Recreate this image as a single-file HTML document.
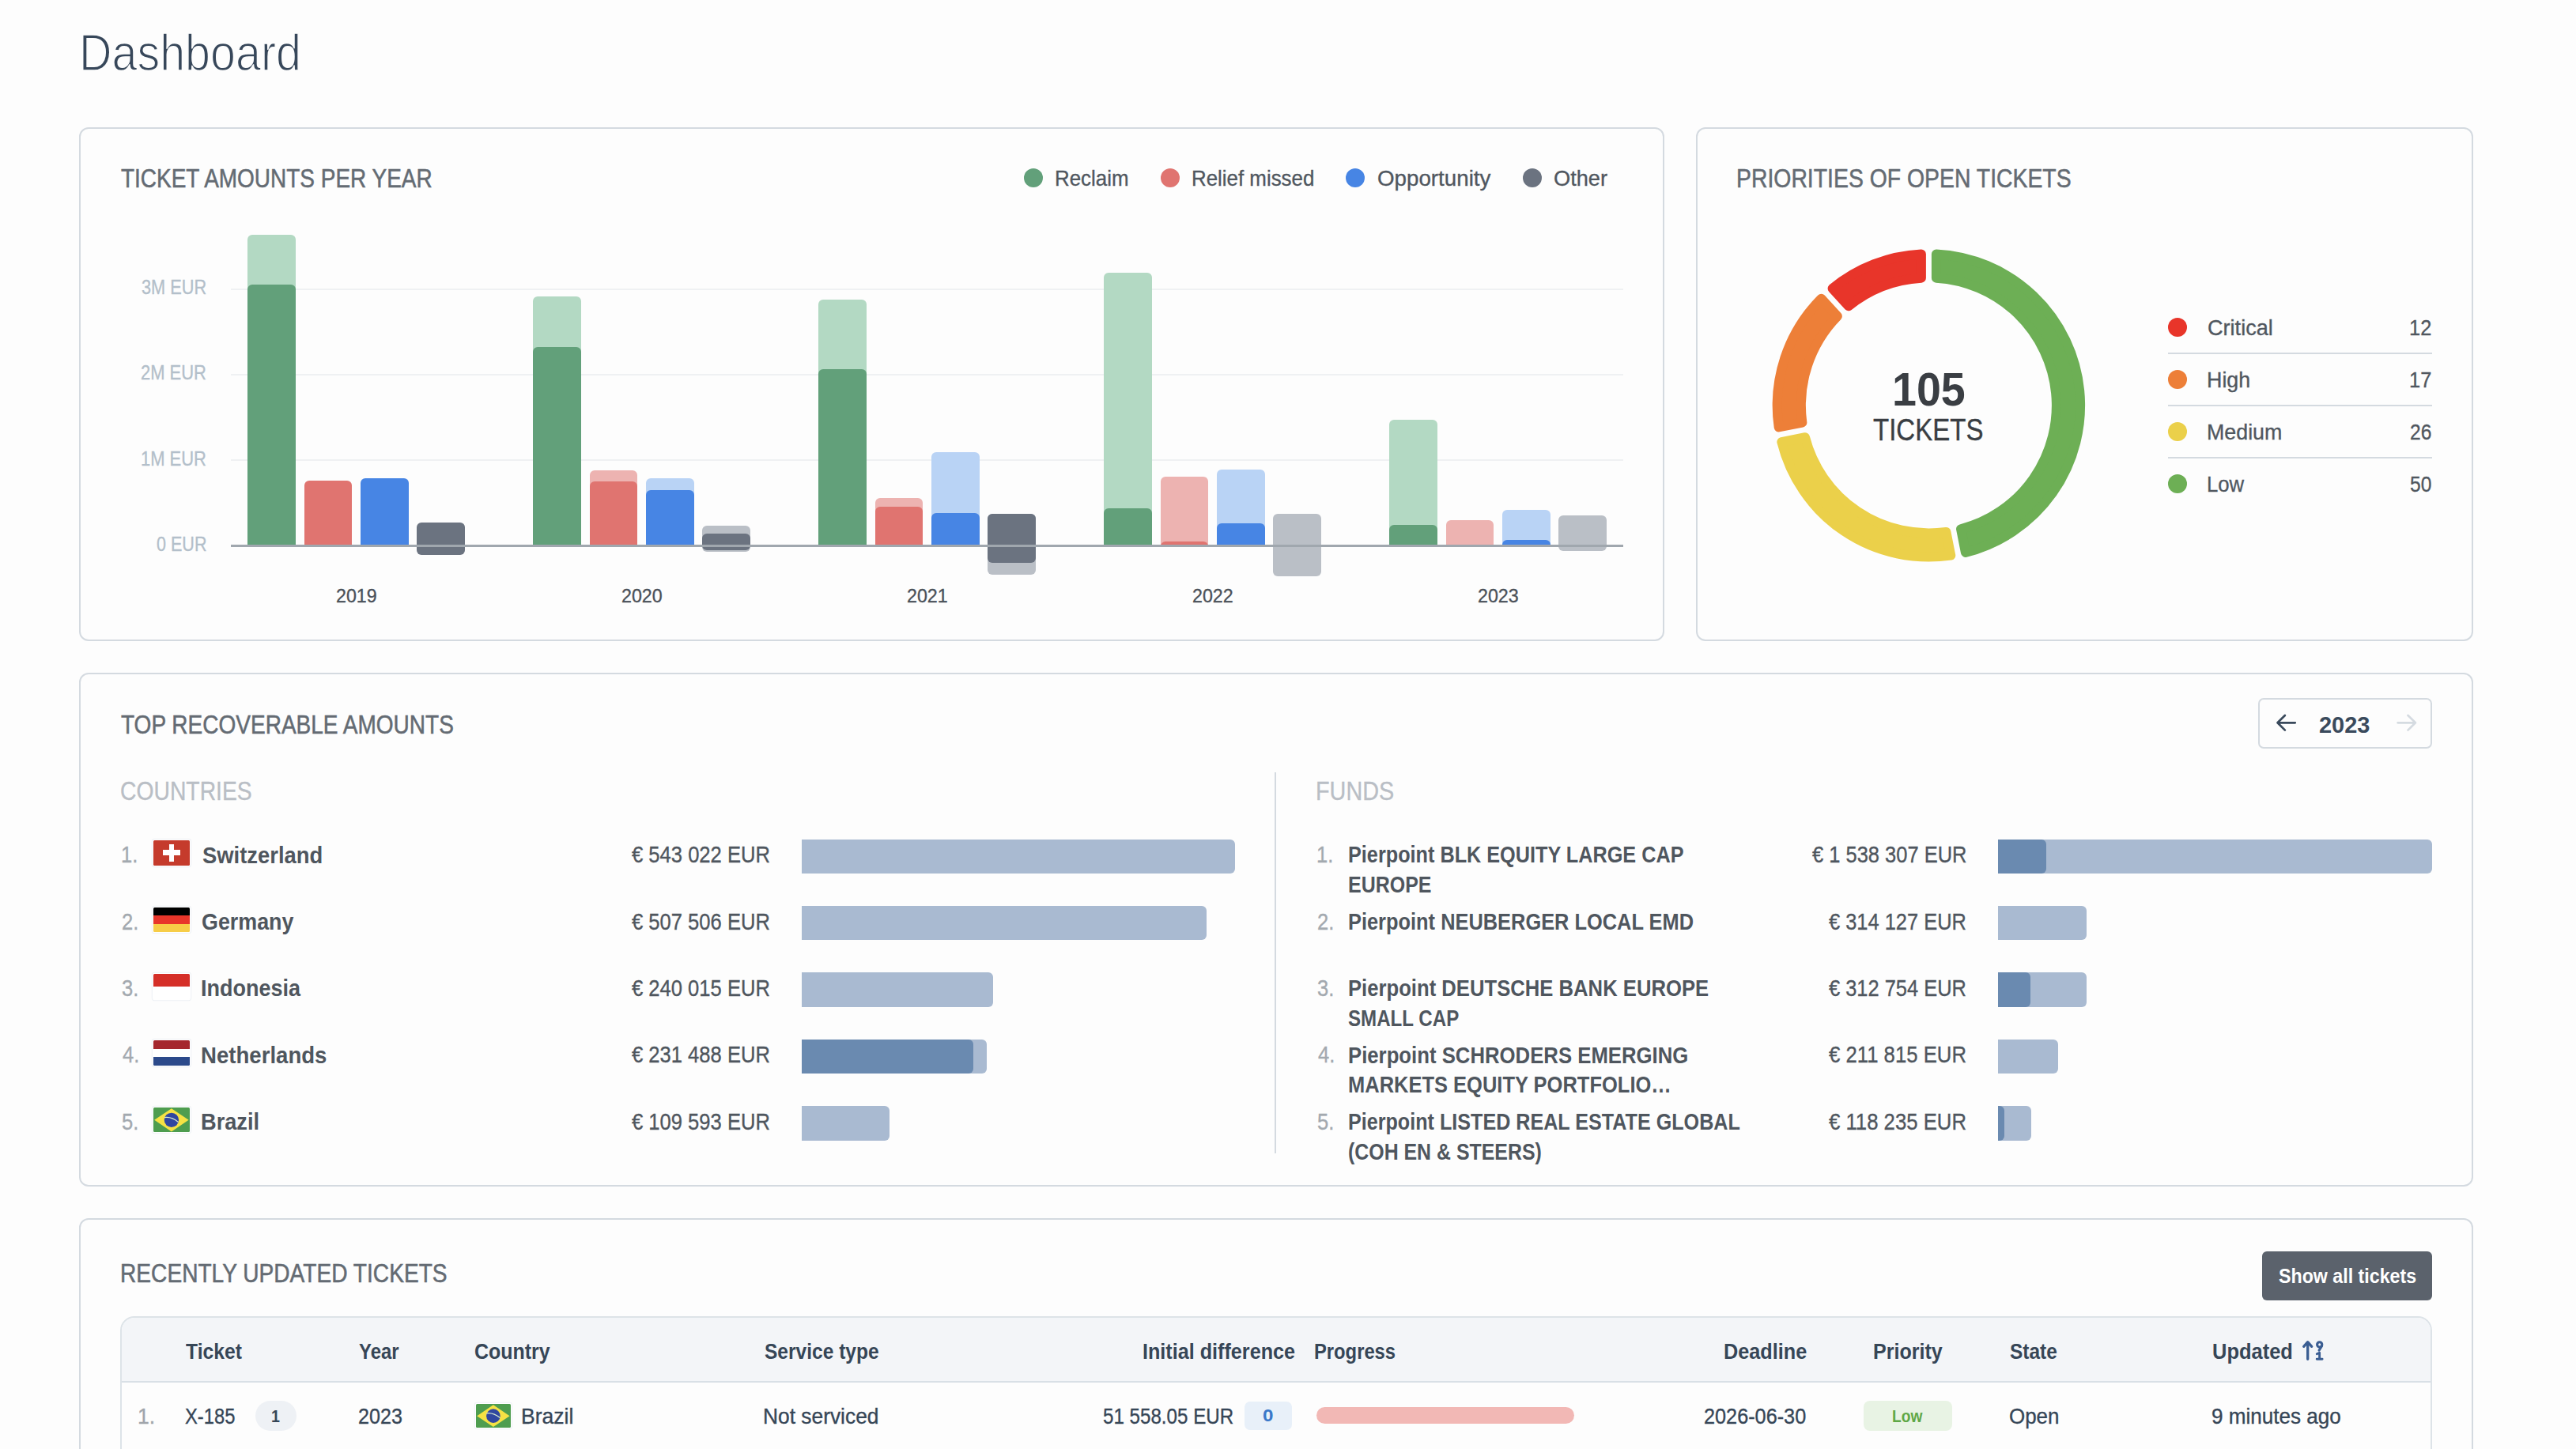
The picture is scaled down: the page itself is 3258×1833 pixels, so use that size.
<!DOCTYPE html>
<html><head><meta charset="utf-8"><title>Dashboard</title>
<style>
html,body{margin:0;padding:0;width:3258px;height:1833px;overflow:hidden;background:#fdfdfd}
body{position:relative;font-family:"Liberation Sans",sans-serif}
.t{position:absolute;white-space:nowrap;line-height:1;transform-origin:0 0}
</style></head><body>
<div style="position:absolute;left:99.7px;top:161.2px;width:2005.3px;height:649.8px;border:2px solid #d4dae0;border-radius:12px;box-sizing:border-box"></div><div style="position:absolute;left:2145.1px;top:161.2px;width:982.9px;height:649.8px;border:2px solid #d4dae0;border-radius:12px;box-sizing:border-box"></div><div style="position:absolute;left:99.7px;top:851.3px;width:3028.3px;height:649.7px;border:2px solid #d4dae0;border-radius:12px;box-sizing:border-box"></div><div style="position:absolute;left:99.7px;top:1541.0px;width:3028.3px;height:359.0px;border:2px solid #d4dae0;border-radius:12px;box-sizing:border-box"></div><div style="position:absolute;left:1295.0px;top:213.0px;width:24.0px;height:24.0px;background:#62a07a;border-radius:50%"></div><div style="position:absolute;left:1468.0px;top:213.0px;width:24.0px;height:24.0px;background:#e07470;border-radius:50%"></div><div style="position:absolute;left:1702.0px;top:213.0px;width:24.0px;height:24.0px;background:#4785e4;border-radius:50%"></div><div style="position:absolute;left:1925.6px;top:213.0px;width:24.0px;height:24.0px;background:#6b7380;border-radius:50%"></div><div style="position:absolute;left:292.0px;top:364.5px;width:1761.0px;height:2.0px;background:#eff1f3"></div><div style="position:absolute;left:292.0px;top:472.6px;width:1761.0px;height:2.0px;background:#eff1f3"></div><div style="position:absolute;left:292.0px;top:580.5px;width:1761.0px;height:2.0px;background:#eff1f3"></div><div style="position:absolute;left:313.2px;top:296.9px;width:60.5px;height:394.4px;background:#b3d9c3;border-radius:6px 6px 0 0"></div><div style="position:absolute;left:313.2px;top:359.5px;width:60.5px;height:331.8px;background:#62a07a;border-radius:6px 6px 0 0"></div><div style="position:absolute;left:384.6px;top:608.1px;width:60.5px;height:83.2px;background:#e07470;border-radius:6px 6px 0 0"></div><div style="position:absolute;left:456.0px;top:605.0px;width:60.5px;height:86.3px;background:#4785e4;border-radius:6px 6px 0 0"></div><div style="position:absolute;left:527.4px;top:661.4px;width:60.5px;height:41.0px;background:#6b7380;border-radius:6px"></div><div style="position:absolute;left:674.2px;top:375.1px;width:60.5px;height:316.2px;background:#b3d9c3;border-radius:6px 6px 0 0"></div><div style="position:absolute;left:674.2px;top:438.6px;width:60.5px;height:252.7px;background:#62a07a;border-radius:6px 6px 0 0"></div><div style="position:absolute;left:745.6px;top:594.8px;width:60.5px;height:96.5px;background:#edb3b1;border-radius:6px 6px 0 0"></div><div style="position:absolute;left:745.6px;top:608.7px;width:60.5px;height:82.6px;background:#e07470;border-radius:6px 6px 0 0"></div><div style="position:absolute;left:817.0px;top:604.6px;width:60.5px;height:86.7px;background:#b9d3f5;border-radius:6px 6px 0 0"></div><div style="position:absolute;left:817.0px;top:619.7px;width:60.5px;height:71.6px;background:#4785e4;border-radius:6px 6px 0 0"></div><div style="position:absolute;left:888.4px;top:665.0px;width:60.5px;height:33.0px;background:#babfc6;border-radius:6px"></div><div style="position:absolute;left:888.4px;top:675.4px;width:60.5px;height:20.6px;background:#6b7380;border-radius:6px"></div><div style="position:absolute;left:1035.2px;top:378.8px;width:60.5px;height:312.5px;background:#b3d9c3;border-radius:6px 6px 0 0"></div><div style="position:absolute;left:1035.2px;top:467.0px;width:60.5px;height:224.3px;background:#62a07a;border-radius:6px 6px 0 0"></div><div style="position:absolute;left:1106.6px;top:629.9px;width:60.5px;height:61.4px;background:#edb3b1;border-radius:6px 6px 0 0"></div><div style="position:absolute;left:1106.6px;top:640.9px;width:60.5px;height:50.4px;background:#e07470;border-radius:6px 6px 0 0"></div><div style="position:absolute;left:1178.0px;top:572.2px;width:60.5px;height:119.1px;background:#b9d3f5;border-radius:6px 6px 0 0"></div><div style="position:absolute;left:1178.0px;top:649.0px;width:60.5px;height:42.3px;background:#4785e4;border-radius:6px 6px 0 0"></div><div style="position:absolute;left:1249.4px;top:650.1px;width:60.5px;height:77.1px;background:#babfc6;border-radius:6px"></div><div style="position:absolute;left:1249.4px;top:650.1px;width:60.5px;height:61.5px;background:#6b7380;border-radius:6px"></div><div style="position:absolute;left:1396.2px;top:345.2px;width:60.5px;height:346.1px;background:#b3d9c3;border-radius:6px 6px 0 0"></div><div style="position:absolute;left:1396.2px;top:642.7px;width:60.5px;height:48.6px;background:#62a07a;border-radius:6px 6px 0 0"></div><div style="position:absolute;left:1467.6px;top:603.0px;width:60.5px;height:88.3px;background:#edb3b1;border-radius:6px 6px 0 0"></div><div style="position:absolute;left:1467.6px;top:684.9px;width:60.5px;height:6.4px;background:#e07470;border-radius:6px 6px 0 0"></div><div style="position:absolute;left:1539.0px;top:593.8px;width:60.5px;height:97.5px;background:#b9d3f5;border-radius:6px 6px 0 0"></div><div style="position:absolute;left:1539.0px;top:662.4px;width:60.5px;height:28.9px;background:#4785e4;border-radius:6px 6px 0 0"></div><div style="position:absolute;left:1610.4px;top:650.3px;width:60.5px;height:78.3px;background:#babfc6;border-radius:6px"></div><div style="position:absolute;left:1757.2px;top:531.0px;width:60.5px;height:160.3px;background:#b3d9c3;border-radius:6px 6px 0 0"></div><div style="position:absolute;left:1757.2px;top:663.6px;width:60.5px;height:27.7px;background:#62a07a;border-radius:6px 6px 0 0"></div><div style="position:absolute;left:1828.6px;top:658.0px;width:60.5px;height:33.3px;background:#edb3b1;border-radius:6px 6px 0 0"></div><div style="position:absolute;left:1900.0px;top:645.0px;width:60.5px;height:46.3px;background:#b9d3f5;border-radius:6px 6px 0 0"></div><div style="position:absolute;left:1900.0px;top:683.0px;width:60.5px;height:8.3px;background:#4785e4;border-radius:6px 6px 0 0"></div><div style="position:absolute;left:1971.4px;top:652.2px;width:60.5px;height:44.5px;background:#babfc6;border-radius:6px"></div><div style="position:absolute;left:292.0px;top:688.9px;width:1761.0px;height:2.8px;background:#a0a7ae"></div><div style="position:absolute;left:2742.1px;top:401.9px;width:23.9px;height:24.0px;background:#e8352a;border-radius:50%"></div><div style="position:absolute;left:2742.1px;top:467.9px;width:23.9px;height:24.0px;background:#ed7f38;border-radius:50%"></div><div style="position:absolute;left:2742.1px;top:534.0px;width:23.9px;height:24.0px;background:#ebd04a;border-radius:50%"></div><div style="position:absolute;left:2742.1px;top:599.8px;width:23.9px;height:24.0px;background:#6daf55;border-radius:50%"></div><div style="position:absolute;left:2742.0px;top:445.9px;width:334.0px;height:2.0px;background:#d4dae0"></div><div style="position:absolute;left:2742.0px;top:511.9px;width:334.0px;height:2.0px;background:#d4dae0"></div><div style="position:absolute;left:2742.0px;top:577.8px;width:334.0px;height:2.0px;background:#d4dae0"></div><div style="position:absolute;left:2856.3px;top:883.2px;width:219.4px;height:63.5px;border:2px solid #d4dae0;border-radius:7px;box-sizing:border-box"></div><div style="position:absolute;left:1612.0px;top:977.0px;width:2.0px;height:481.7px;background:#d4dae0"></div><div style="position:absolute;left:194.2px;top:1063.1px;width:45.8px;height:31.7px;overflow:hidden;border-radius:1.5px;box-shadow:0 0 0 1.2px #fff,0 0 0 2.2px #eef1f5"><div style="position:absolute;inset:0;background:#c53b2c"></div><div style="position:absolute;left:19.80px;top:4.60px;width:6.2px;height:22.5px;background:#fff"></div><div style="position:absolute;left:11.80px;top:12.35px;width:22.2px;height:7px;background:#fff"></div></div><div style="position:absolute;left:1013.8px;top:1061.6px;width:548.0px;height:43.4px;background:#a9bad1;border-radius:0 6px 6px 0"></div><div style="position:absolute;left:194.2px;top:1147.5px;width:45.8px;height:31.7px;overflow:hidden;border-radius:1.5px;box-shadow:0 0 0 1.2px #fff,0 0 0 2.2px #eef1f5"><div style="position:absolute;inset:0;background:linear-gradient(#000 0 33.3%,#e8352a 33.3% 66.6%,#f7cd47 66.6%)"></div></div><div style="position:absolute;left:1013.8px;top:1146.0px;width:511.8px;height:43.4px;background:#a9bad1;border-radius:0 6px 6px 0"></div><div style="position:absolute;left:194.2px;top:1231.9px;width:45.8px;height:31.7px;overflow:hidden;border-radius:1.5px;box-shadow:0 0 0 1.2px #fff,0 0 0 2.2px #eef1f5"><div style="position:absolute;inset:0;background:linear-gradient(#d52f28 0 50%,#fff 50%)"></div></div><div style="position:absolute;left:1013.8px;top:1230.4px;width:241.9px;height:43.4px;background:#a9bad1;border-radius:0 6px 6px 0"></div><div style="position:absolute;left:194.2px;top:1316.3px;width:45.8px;height:31.7px;overflow:hidden;border-radius:1.5px;box-shadow:0 0 0 1.2px #fff,0 0 0 2.2px #eef1f5"><div style="position:absolute;inset:0;background:linear-gradient(#a5272e 0 33.3%,#fff 33.3% 66.6%,#2c4a8b 66.6%)"></div></div><div style="position:absolute;left:1013.8px;top:1314.8px;width:234.1px;height:43.4px;background:#a9bad1;border-radius:0 6px 6px 0"></div><div style="position:absolute;left:1013.8px;top:1314.8px;width:217.0px;height:43.4px;background:#6a8ab0;border-radius:0 6px 6px 0"></div><div style="position:absolute;left:194.2px;top:1400.7px;width:45.8px;height:31.7px;overflow:hidden;border-radius:1.5px;box-shadow:0 0 0 1.2px #fff,0 0 0 2.2px #eef1f5"><div style="position:absolute;inset:0;background:#4e9d4f"></div><svg style="position:absolute;left:0;top:0" width="45.8" height="31.7"><polygon points="22.9,1.2 44.599999999999994,15.85 22.9,30.5 1.2,15.85" fill="#f5e244"/><circle cx="22.9" cy="15.85" r="9.19" fill="#3047a0"/><path d="M14.1,12.6 Q22.9,11.3 31.5,18.4" fill="none" stroke="#d8ecd0" stroke-width="1.3"/></svg></div><div style="position:absolute;left:1013.8px;top:1399.2px;width:111.1px;height:43.4px;background:#a9bad1;border-radius:0 6px 6px 0"></div><div style="position:absolute;left:2526.9px;top:1061.6px;width:549.0px;height:43.4px;background:#a9bad1;border-radius:0 6px 6px 0"></div><div style="position:absolute;left:2526.9px;top:1061.6px;width:60.9px;height:43.4px;background:#6a8ab0;border-radius:0 6px 6px 0"></div><div style="position:absolute;left:2526.9px;top:1146.0px;width:112.1px;height:43.4px;background:#a9bad1;border-radius:0 6px 6px 0"></div><div style="position:absolute;left:2526.9px;top:1230.4px;width:112.1px;height:43.4px;background:#a9bad1;border-radius:0 6px 6px 0"></div><div style="position:absolute;left:2526.9px;top:1230.4px;width:41.5px;height:43.4px;background:#6a8ab0;border-radius:0 6px 6px 0"></div><div style="position:absolute;left:2526.9px;top:1314.8px;width:75.9px;height:43.4px;background:#a9bad1;border-radius:0 6px 6px 0"></div><div style="position:absolute;left:2526.9px;top:1399.2px;width:41.9px;height:43.4px;background:#a9bad1;border-radius:0 6px 6px 0"></div><div style="position:absolute;left:2526.9px;top:1399.2px;width:7.9px;height:43.4px;background:#6a8ab0;border-radius:0 6px 6px 0"></div><div style="position:absolute;left:2861.0px;top:1583.0px;width:215.0px;height:62.0px;background:#5b626c;border-radius:6px"></div><div style="position:absolute;left:151.8px;top:1665px;width:2923.9px;height:300px;border:2px solid #dde3e8;border-radius:18px;box-sizing:border-box;overflow:hidden"><div style="position:absolute;left:0;top:0;right:0;height:80px;background:#f3f5f8;border-bottom:2px solid #d9e0e6"></div></div><div style="position:absolute;left:323.1px;top:1772.3px;width:51.7px;height:37.5px;background:#eef1f5;border-radius:19px"></div><div style="position:absolute;left:602.2px;top:1775.8px;width:43.8px;height:30.3px;overflow:hidden;border-radius:1.5px;box-shadow:0 0 0 1.2px #fff,0 0 0 2.2px #eef1f5"><div style="position:absolute;inset:0;background:#4e9d4f"></div><svg style="position:absolute;left:0;top:0" width="43.8" height="30.3"><polygon points="21.9,1.2 42.599999999999994,15.15 21.9,29.1 1.2,15.15" fill="#f5e244"/><circle cx="21.9" cy="15.15" r="8.79" fill="#3047a0"/><path d="M13.1,11.9 Q21.9,10.7 30.5,17.6" fill="none" stroke="#d8ecd0" stroke-width="1.3"/></svg></div><div style="position:absolute;left:1574.2px;top:1773.3px;width:59.5px;height:35.3px;background:#e8f0f9;border-radius:7px"></div><div style="position:absolute;left:1664.9px;top:1780.1px;width:326.1px;height:21.4px;background:#f2b8b5;border-radius:11px"></div><div style="position:absolute;left:2357.1px;top:1771.9px;width:111.9px;height:37.9px;background:#e8f3e4;border-radius:8px"></div>
<svg style="position:absolute;left:0;top:0" width="3258" height="1833" viewBox="0 0 3258 1833"><path d="M2448.90,321.44 A191.7,191.7 0 0 1 2485.91,698.87 L2480.03,669.20 A161.5,161.5 0 0 0 2448.90,351.68 Z" fill="#6daf55" stroke="#6daf55" stroke-width="12" stroke-linejoin="round"/><path d="M2467.27,702.56 A191.7,191.7 0 0 1 2253.35,559.08 L2283.02,553.26 A161.5,161.5 0 0 0 2461.40,672.90 Z" fill="#ebd04a" stroke="#ebd04a" stroke-width="12" stroke-linejoin="round"/><path d="M2249.69,540.44 A191.7,191.7 0 0 1 2303.52,377.68 L2323.87,400.05 A161.5,161.5 0 0 0 2279.37,534.62 Z" fill="#ed7f38" stroke="#ed7f38" stroke-width="12" stroke-linejoin="round"/><path d="M2317.57,364.89 A191.7,191.7 0 0 1 2429.90,321.44 L2429.90,351.68 A161.5,161.5 0 0 0 2337.92,387.26 Z" fill="#e8352a" stroke="#e8352a" stroke-width="12" stroke-linejoin="round"/></svg>
<svg style="position:absolute;left:0;top:0" width="3258" height="1833"><path d="M2902.8,914.3 H2880.6 M2889.9,905 L2880.5,914.3 L2889.9,923.6" fill="none" stroke="#3a4a5c" stroke-width="2.7" stroke-linecap="round" stroke-linejoin="round"/><path d="M3032.6,914.3 H3054.8 M3045.5,905 L3054.9,914.3 L3045.5,923.6" fill="none" stroke="#d5dbe1" stroke-width="2.7" stroke-linecap="round" stroke-linejoin="round"/></svg>
<svg style="position:absolute;left:0;top:0" width="3258" height="1833"><g fill="none" stroke="#3a5d92" stroke-linecap="round" stroke-linejoin="round"><path d="M2918.7,1719.3 V1697.8 M2913.7,1703.3 L2918.7,1697.7 L2923.7,1703.3" stroke-width="3.3"/><circle cx="2933.7" cy="1700.9" r="3.1" stroke-width="3.1"/><path d="M2936.4,1703 L2933.1,1708.2" stroke-width="3.1"/><path d="M2930.3,1712.7 L2933.6,1711.2 V1719.3 M2930.2,1719.3 H2937.1" stroke-width="2.9"/></g></svg>
<div class="t" style="left:100.3px;top:35.1px;font-size:64.83px;-webkit-text-stroke:1.6px #fdfdfd;color:#37475a;transform:scaleX(0.8860)">Dashboard</div><div class="t" style="left:152.7px;top:209.4px;font-size:33.14px;-webkit-text-stroke:0.55px currentColor;color:#646b73;transform:scaleX(0.8443)">TICKET AMOUNTS PER YEAR</div><div class="t" style="left:2196.1px;top:209.3px;font-size:33.14px;-webkit-text-stroke:0.55px currentColor;color:#646b73;transform:scaleX(0.8567)">PRIORITIES OF OPEN TICKETS</div><div class="t" style="left:152.9px;top:899.6px;font-size:33.14px;-webkit-text-stroke:0.55px currentColor;color:#646b73;transform:scaleX(0.8458)">TOP RECOVERABLE AMOUNTS</div><div class="t" style="left:151.8px;top:1593.6px;font-size:33.14px;-webkit-text-stroke:0.55px currentColor;color:#646b73;transform:scaleX(0.8490)">RECENTLY UPDATED TICKETS</div><div class="t" style="left:1333.7px;top:211.7px;font-size:27.91px;-webkit-text-stroke:0.35px currentColor;color:#50575f;transform:scaleX(0.9272)">Reclaim</div><div class="t" style="left:1506.6px;top:211.7px;font-size:27.91px;-webkit-text-stroke:0.35px currentColor;color:#50575f;transform:scaleX(0.9275)">Relief missed</div><div class="t" style="left:1741.6px;top:211.7px;font-size:27.91px;-webkit-text-stroke:0.35px currentColor;color:#50575f;transform:scaleX(0.9942)">Opportunity</div><div class="t" style="left:1965.0px;top:211.7px;font-size:27.91px;-webkit-text-stroke:0.35px currentColor;color:#50575f;transform:scaleX(0.9742)">Other</div><div class="t" style="left:179.3px;top:350.8px;font-size:25.58px;-webkit-text-stroke:0.35px currentColor;color:#b3bfca;transform:scaleX(0.8495)">3M EUR</div><div class="t" style="left:178.4px;top:459.3px;font-size:25.58px;-webkit-text-stroke:0.35px currentColor;color:#b3bfca;transform:scaleX(0.8585)">2M EUR</div><div class="t" style="left:178.4px;top:567.8px;font-size:25.58px;-webkit-text-stroke:0.35px currentColor;color:#b3bfca;transform:scaleX(0.8585)">1M EUR</div><div class="t" style="left:198.0px;top:675.8px;font-size:25.58px;-webkit-text-stroke:0.35px currentColor;color:#b3bfca;transform:scaleX(0.8421)">0 EUR</div><div class="t" style="left:424.6px;top:741.8px;font-size:24.71px;-webkit-text-stroke:0.35px currentColor;color:#4b5159;transform:scaleX(0.9400)">2019</div><div class="t" style="left:785.6px;top:741.8px;font-size:24.71px;-webkit-text-stroke:0.35px currentColor;color:#4b5159;transform:scaleX(0.9400)">2020</div><div class="t" style="left:1146.6px;top:741.8px;font-size:24.71px;-webkit-text-stroke:0.35px currentColor;color:#4b5159;transform:scaleX(0.9400)">2021</div><div class="t" style="left:1507.6px;top:741.8px;font-size:24.71px;-webkit-text-stroke:0.35px currentColor;color:#4b5159;transform:scaleX(0.9400)">2022</div><div class="t" style="left:1868.6px;top:741.8px;font-size:24.71px;-webkit-text-stroke:0.35px currentColor;color:#4b5159;transform:scaleX(0.9400)">2023</div><div class="t" style="left:2392.5px;top:463.0px;font-size:59.30px;font-weight:bold;color:#3a3e43;transform:scaleX(0.9373)">105</div><div class="t" style="left:2369.1px;top:524.6px;font-size:38.52px;-webkit-text-stroke:0.35px currentColor;color:#3a3e43;transform:scaleX(0.8571)">TICKETS</div><div class="t" style="left:2792.2px;top:400.8px;font-size:27.91px;-webkit-text-stroke:0.35px currentColor;color:#50575f;transform:scaleX(0.9708)">Critical</div><div class="t" style="left:3047.4px;top:400.8px;font-size:27.91px;-webkit-text-stroke:0.35px currentColor;color:#50575f;transform:scaleX(0.9119)">12</div><div class="t" style="left:2791.3px;top:466.8px;font-size:27.91px;-webkit-text-stroke:0.35px currentColor;color:#50575f;transform:scaleX(0.9619)">High</div><div class="t" style="left:3047.4px;top:466.8px;font-size:27.91px;-webkit-text-stroke:0.35px currentColor;color:#50575f;transform:scaleX(0.9119)">17</div><div class="t" style="left:2791.3px;top:532.9px;font-size:27.91px;-webkit-text-stroke:0.35px currentColor;color:#50575f;transform:scaleX(0.9608)">Medium</div><div class="t" style="left:3048.3px;top:532.9px;font-size:27.91px;-webkit-text-stroke:0.35px currentColor;color:#50575f;transform:scaleX(0.8810)">26</div><div class="t" style="left:2791.4px;top:598.7px;font-size:27.91px;-webkit-text-stroke:0.35px currentColor;color:#50575f;transform:scaleX(0.9216)">Low</div><div class="t" style="left:3048.3px;top:598.7px;font-size:27.91px;-webkit-text-stroke:0.35px currentColor;color:#50575f;transform:scaleX(0.8810)">50</div><div class="t" style="left:2933.3px;top:901.7px;font-size:30.09px;font-weight:bold;color:#3a4a5c;transform:scaleX(0.9619)">2023</div><div class="t" style="left:152.0px;top:983.6px;font-size:33.14px;-webkit-text-stroke:0.35px currentColor;color:#b9bec5;transform:scaleX(0.8545)">COUNTRIES</div><div class="t" style="left:1664.0px;top:983.7px;font-size:33.14px;-webkit-text-stroke:0.35px currentColor;color:#b9bec5;transform:scaleX(0.8694)">FUNDS</div><div class="t" style="left:152.7px;top:1067.1px;font-size:29.07px;-webkit-text-stroke:0.35px currentColor;color:#a3a9af;transform:scaleX(0.8800)">1.</div><div class="t" style="left:256.0px;top:1066.5px;font-size:29.80px;font-weight:bold;color:#4f565e;transform:scaleX(0.9203)">Switzerland</div><div class="t" style="left:799.3px;top:1067.1px;font-size:29.07px;-webkit-text-stroke:0.35px currentColor;color:#4f565e;transform:scaleX(0.8804)">€ 543 022 EUR</div><div class="t" style="left:153.6px;top:1151.5px;font-size:29.07px;-webkit-text-stroke:0.35px currentColor;color:#a3a9af;transform:scaleX(0.8800)">2.</div><div class="t" style="left:255.1px;top:1150.9px;font-size:29.80px;font-weight:bold;color:#4f565e;transform:scaleX(0.9016)">Germany</div><div class="t" style="left:799.4px;top:1151.5px;font-size:29.07px;-webkit-text-stroke:0.35px currentColor;color:#4f565e;transform:scaleX(0.8800)">€ 507 506 EUR</div><div class="t" style="left:153.6px;top:1235.9px;font-size:29.07px;-webkit-text-stroke:0.35px currentColor;color:#a3a9af;transform:scaleX(0.8800)">3.</div><div class="t" style="left:254.2px;top:1235.3px;font-size:29.80px;font-weight:bold;color:#4f565e;transform:scaleX(0.9066)">Indonesia</div><div class="t" style="left:799.4px;top:1235.9px;font-size:29.07px;-webkit-text-stroke:0.35px currentColor;color:#4f565e;transform:scaleX(0.8800)">€ 240 015 EUR</div><div class="t" style="left:154.5px;top:1320.3px;font-size:29.07px;-webkit-text-stroke:0.35px currentColor;color:#a3a9af;transform:scaleX(0.8800)">4.</div><div class="t" style="left:254.1px;top:1319.7px;font-size:29.80px;font-weight:bold;color:#4f565e;transform:scaleX(0.9260)">Netherlands</div><div class="t" style="left:799.4px;top:1320.3px;font-size:29.07px;-webkit-text-stroke:0.35px currentColor;color:#4f565e;transform:scaleX(0.8800)">€ 231 488 EUR</div><div class="t" style="left:153.6px;top:1404.7px;font-size:29.07px;-webkit-text-stroke:0.35px currentColor;color:#a3a9af;transform:scaleX(0.8800)">5.</div><div class="t" style="left:254.2px;top:1404.1px;font-size:29.80px;font-weight:bold;color:#4f565e;transform:scaleX(0.9123)">Brazil</div><div class="t" style="left:799.4px;top:1404.7px;font-size:29.07px;-webkit-text-stroke:0.35px currentColor;color:#4f565e;transform:scaleX(0.8800)">€ 109 593 EUR</div><div class="t" style="left:1665.2px;top:1067.1px;font-size:29.07px;-webkit-text-stroke:0.35px currentColor;color:#a3a9af;transform:scaleX(0.8800)">1.</div><div class="t" style="left:1704.5px;top:1067.4px;font-size:28.78px;font-weight:bold;color:#4f565e;transform:scaleX(0.8775)">Pierpoint BLK EQUITY LARGE CAP</div><div class="t" style="left:1704.5px;top:1105.0px;font-size:28.78px;font-weight:bold;color:#4f565e;transform:scaleX(0.8679)">EUROPE</div><div class="t" style="left:2291.8px;top:1067.1px;font-size:29.07px;-webkit-text-stroke:0.35px currentColor;color:#4f565e;transform:scaleX(0.8766)">€ 1 538 307 EUR</div><div class="t" style="left:1666.1px;top:1151.5px;font-size:29.07px;-webkit-text-stroke:0.35px currentColor;color:#a3a9af;transform:scaleX(0.8800)">2.</div><div class="t" style="left:1704.5px;top:1151.8px;font-size:28.78px;font-weight:bold;color:#4f565e;transform:scaleX(0.8830)">Pierpoint NEUBERGER LOCAL EMD</div><div class="t" style="left:2313.3px;top:1151.5px;font-size:29.07px;-webkit-text-stroke:0.35px currentColor;color:#4f565e;transform:scaleX(0.8753)">€ 314 127 EUR</div><div class="t" style="left:1666.1px;top:1235.9px;font-size:29.07px;-webkit-text-stroke:0.35px currentColor;color:#a3a9af;transform:scaleX(0.8800)">3.</div><div class="t" style="left:1704.5px;top:1236.2px;font-size:28.78px;font-weight:bold;color:#4f565e;transform:scaleX(0.8919)">Pierpoint DEUTSCHE BANK EUROPE</div><div class="t" style="left:1705.4px;top:1273.8px;font-size:28.78px;font-weight:bold;color:#4f565e;transform:scaleX(0.8389)">SMALL CAP</div><div class="t" style="left:2313.3px;top:1235.9px;font-size:29.07px;-webkit-text-stroke:0.35px currentColor;color:#4f565e;transform:scaleX(0.8753)">€ 312 754 EUR</div><div class="t" style="left:1667.0px;top:1320.3px;font-size:29.07px;-webkit-text-stroke:0.35px currentColor;color:#a3a9af;transform:scaleX(0.8800)">4.</div><div class="t" style="left:1704.5px;top:1320.6px;font-size:28.78px;font-weight:bold;color:#4f565e;transform:scaleX(0.8945)">Pierpoint SCHRODERS EMERGING</div><div class="t" style="left:1704.5px;top:1358.2px;font-size:28.78px;font-weight:bold;color:#4f565e;transform:scaleX(0.8861)">MARKETS EQUITY PORTFOLIO…</div><div class="t" style="left:2313.3px;top:1320.3px;font-size:29.07px;-webkit-text-stroke:0.35px currentColor;color:#4f565e;transform:scaleX(0.8850)">€ 211 815 EUR</div><div class="t" style="left:1666.1px;top:1404.7px;font-size:29.07px;-webkit-text-stroke:0.35px currentColor;color:#a3a9af;transform:scaleX(0.8800)">5.</div><div class="t" style="left:1704.5px;top:1405.0px;font-size:28.78px;font-weight:bold;color:#4f565e;transform:scaleX(0.8739)">Pierpoint LISTED REAL ESTATE GLOBAL</div><div class="t" style="left:1704.5px;top:1442.6px;font-size:28.78px;font-weight:bold;color:#4f565e;transform:scaleX(0.8653)">(COH EN &amp; STEERS)</div><div class="t" style="left:2313.3px;top:1404.7px;font-size:29.07px;-webkit-text-stroke:0.35px currentColor;color:#4f565e;transform:scaleX(0.8850)">€ 118 235 EUR</div><div class="t" style="left:2881.7px;top:1601.3px;font-size:26.16px;font-weight:bold;color:#ffffff;transform:scaleX(0.8876)">Show all tickets</div><div class="t" style="left:235.0px;top:1696.0px;font-size:28.05px;font-weight:bold;color:#364657;transform:scaleX(0.8802)">Ticket</div><div class="t" style="left:453.5px;top:1696.0px;font-size:28.05px;font-weight:bold;color:#364657;transform:scaleX(0.8525)">Year</div><div class="t" style="left:599.8px;top:1696.0px;font-size:28.05px;font-weight:bold;color:#364657;transform:scaleX(0.8896)">Country</div><div class="t" style="left:966.8px;top:1696.0px;font-size:28.05px;font-weight:bold;color:#364657;transform:scaleX(0.8751)">Service type</div><div class="t" style="left:1445.0px;top:1696.0px;font-size:28.05px;font-weight:bold;color:#364657;transform:scaleX(0.8975)">Initial difference</div><div class="t" style="left:1662.2px;top:1696.0px;font-size:28.05px;font-weight:bold;color:#364657;transform:scaleX(0.8475)">Progress</div><div class="t" style="left:2179.5px;top:1696.0px;font-size:28.05px;font-weight:bold;color:#364657;transform:scaleX(0.9003)">Deadline</div><div class="t" style="left:2368.7px;top:1696.0px;font-size:28.05px;font-weight:bold;color:#364657;transform:scaleX(0.8935)">Priority</div><div class="t" style="left:2541.9px;top:1696.0px;font-size:28.05px;font-weight:bold;color:#364657;transform:scaleX(0.8723)">State</div><div class="t" style="left:2797.5px;top:1696.0px;font-size:28.05px;font-weight:bold;color:#364657;transform:scaleX(0.9086)">Updated</div><div class="t" style="left:173.6px;top:1778.6px;font-size:27.03px;-webkit-text-stroke:0.35px currentColor;color:#a0a5ab;transform:scaleX(0.9829)">1.</div><div class="t" style="left:234.3px;top:1778.6px;font-size:27.03px;-webkit-text-stroke:0.35px currentColor;color:#364657;transform:scaleX(0.8795)">X-185</div><div class="t" style="left:342.6px;top:1780.6px;font-size:21.22px;font-weight:bold;color:#364657;transform:scaleX(0.9273)">1</div><div class="t" style="left:453.1px;top:1778.6px;font-size:27.03px;-webkit-text-stroke:0.35px currentColor;color:#364657;transform:scaleX(0.9298)">2023</div><div class="t" style="left:658.8px;top:1778.6px;font-size:27.03px;-webkit-text-stroke:0.35px currentColor;color:#364657;transform:scaleX(0.9822)">Brazil</div><div class="t" style="left:964.8px;top:1778.6px;font-size:27.03px;-webkit-text-stroke:0.35px currentColor;color:#364657;transform:scaleX(0.9754)">Not serviced</div><div class="t" style="left:1394.8px;top:1778.6px;font-size:27.03px;-webkit-text-stroke:0.35px currentColor;color:#364657;transform:scaleX(0.8940)">51 558.05 EUR</div><div class="t" style="left:1597.2px;top:1781.1px;font-size:21.51px;font-weight:bold;color:#3a78c9;transform:scaleX(1.1250)">0</div><div class="t" style="left:2155.3px;top:1778.6px;font-size:27.03px;-webkit-text-stroke:0.35px currentColor;color:#364657;transform:scaleX(0.9349)">2026-06-30</div><div class="t" style="left:2392.9px;top:1780.5px;font-size:21.22px;font-weight:bold;color:#5fa847;transform:scaleX(0.9040)">Low</div><div class="t" style="left:2540.9px;top:1778.6px;font-size:27.03px;-webkit-text-stroke:0.35px currentColor;color:#364657;transform:scaleX(0.9600)">Open</div><div class="t" style="left:2796.5px;top:1778.6px;font-size:27.03px;-webkit-text-stroke:0.35px currentColor;color:#364657;transform:scaleX(0.9655)">9 minutes ago</div>
</body></html>
